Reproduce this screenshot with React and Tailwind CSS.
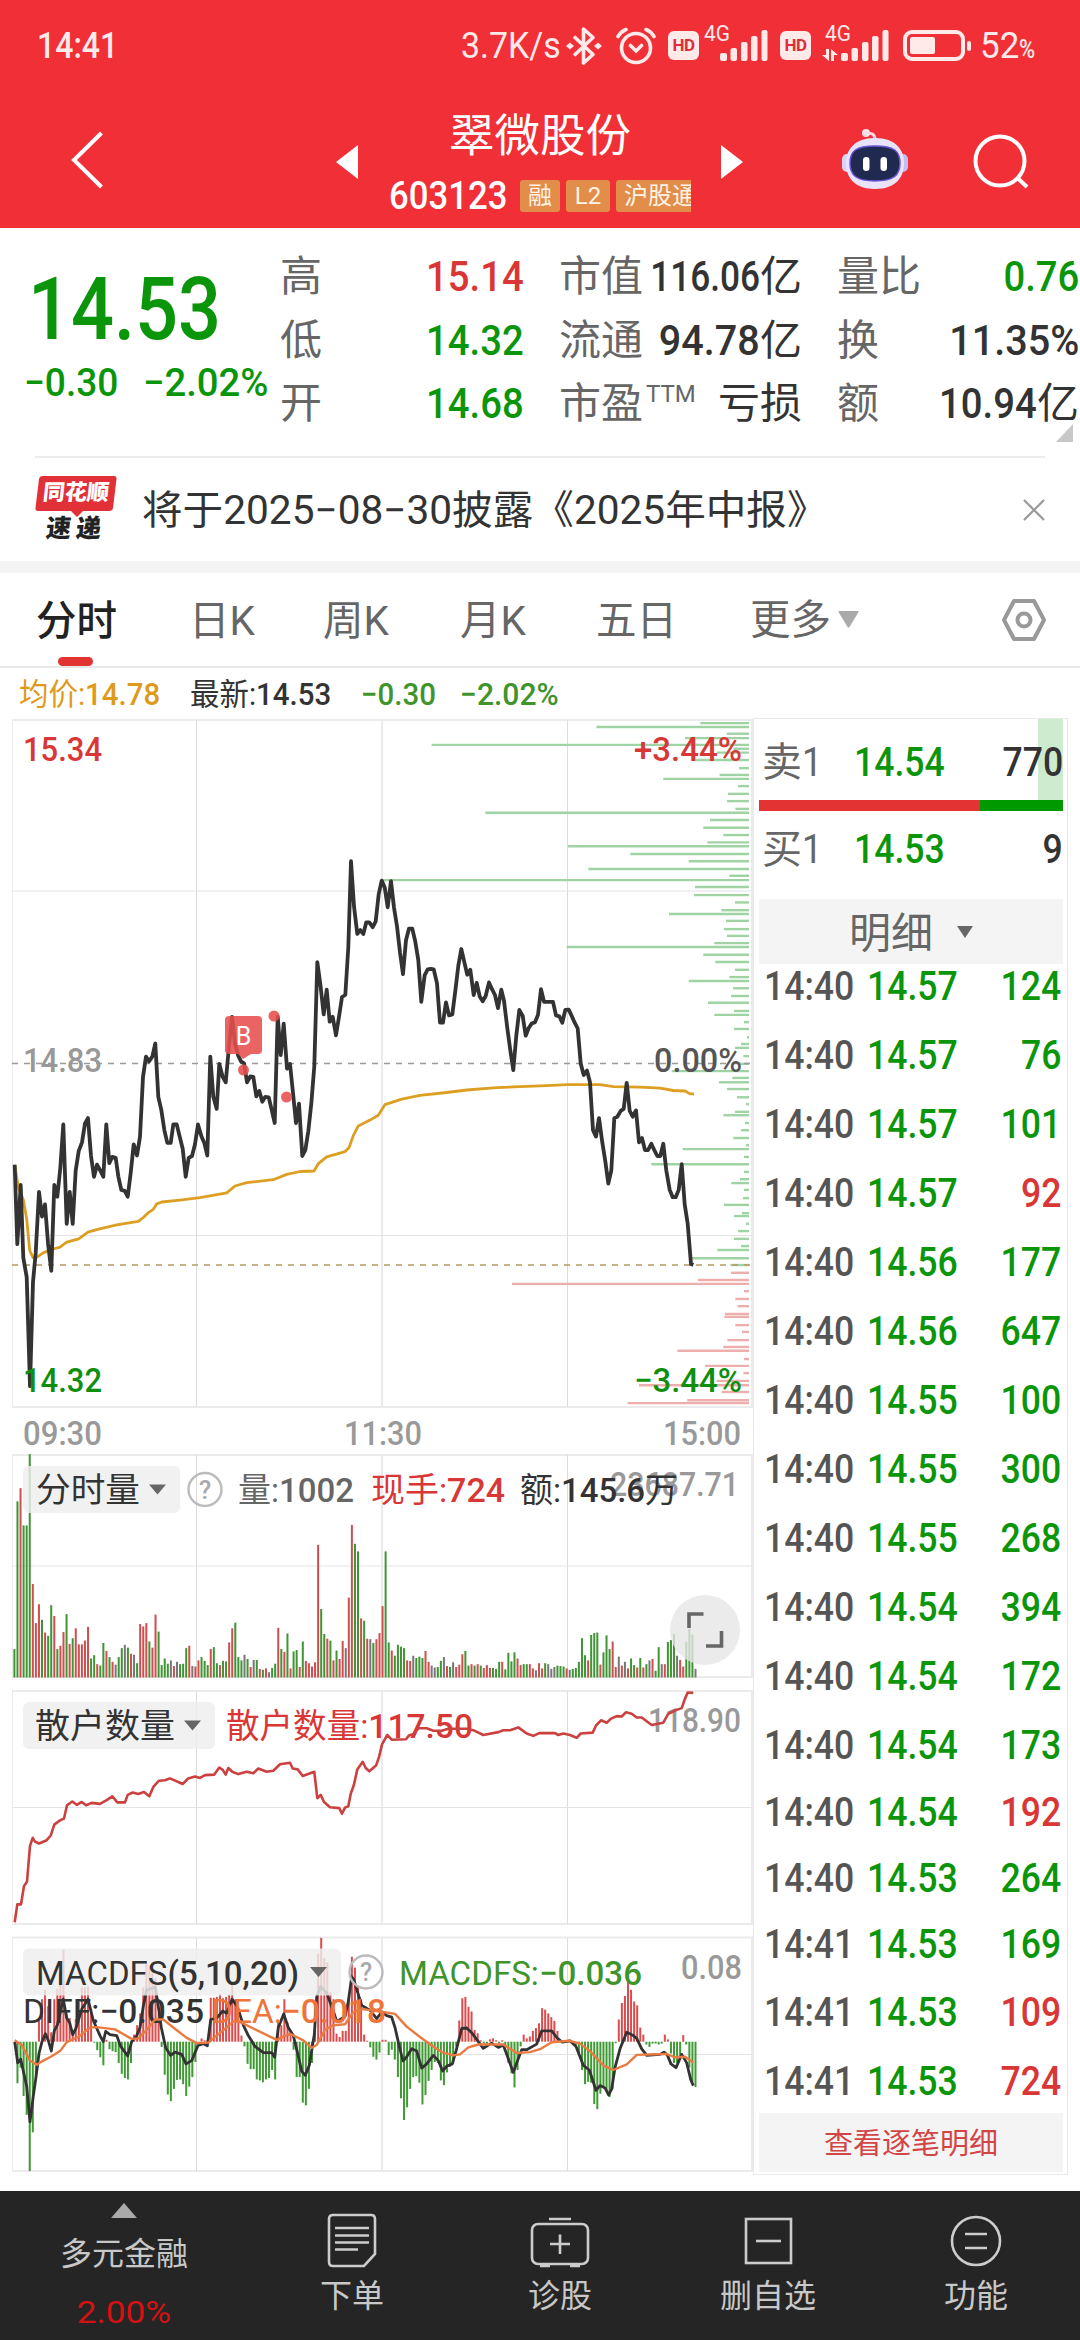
const RED = '#d93636';
const GREEN = '#0f8f0f';

// raw samples are stored on a 3x grid, every panel has its own vertical factor
const PRICE_LINE = `44,938 52,1102 62,980 70,1130 80,1170 90,1395 99,1180 107,1120 117,994 126,1045 135,1020 144,1100 154,1157 163,980 172,1004 181,945 190,855 200,1060 209,994 218,1060 227,950 236,910 246,892 255,853 264,842 273,920 282,963 291,938 301,950 310,963 319,855 328,935 337,922 347,924 355,962 364,990 374,992 383,1004 392,955 401,896 411,919 420,880 429,757 438,715 447,725 457,715 466,688 475,798 484,825 493,866 502,893 512,893 520,855 530,855 539,880 548,905 557,963 566,924 576,920 585,896 594,855 604,879 613,893 622,919 631,715 640,798 650,823 658,730 668,757 677,768 686,700 696,633 705,688 714,712 723,725 732,729 741,768 751,756 760,757 769,797 778,786 787,808 796,798 806,799 815,825 824,852 833,632 842,712 851,647 861,740 870,730 879,790 888,852 897,812 907,920 916,908 925,869 934,812 943,735 952,520 961,565 971,628 980,577 989,643 998,633 1008,671 1017,633 1026,592 1036,588 1045,490 1053,312 1062,405 1072,462 1081,454 1090,462 1099,438 1108,438 1118,448 1127,436 1136,380
1145,352 1154,366 1163,407 1173,353 1182,408 1191,446 1200,500 1209,545 1218,475 1227,451 1237,451 1246,478 1255,516 1264,602 1274,547 1283,535 1292,534 1301,535 1311,564 1320,645 1329,645 1338,603 1347,630 1357,628 1366,580 1375,528 1384,493 1393,520 1402,546 1411,536 1421,588 1430,563 1439,591 1448,601 1457,590 1467,562 1476,576 1485,588 1494,615 1504,577 1512,600 1522,656 1531,702 1540,743 1549,672 1558,619 1568,631 1577,672 1586,656 1595,647 1605,644 1614,629 1623,576 1632,602 1659,602 1668,630 1678,632 1687,645 1696,619 1706,618 1715,631 1724,645 1733,657 1742,729 1751,753 1761,744 1770,768 1779,867 1788,880 1797,842 1807,892 1816,931 1825,977 1834,950 1843,842 1852,839 1862,827 1871,823 1880,769 1889,827 1898,839 1908,826 1917,892 1926,883 1935,908 1944,908 1954,895 1963,908 1972,920 1981,920 1990,895 1999,950 2009,990 2018,1005 2027,1005 2036,990 2045,937 2054,1020 2063,1060 2073,1143 2080,1145`;

const AVG_LINE = `44,938 55,985 70,1010 80,1050 89,1115 99,1130 112,1128 130,1120 154,1113 180,1108 200,1098 236,1091 264,1077 290,1072 350,1062 415,1055 430,1047 445,1037 460,1030 470,1019 485,1015 540,1011 600,1006 680,996 705,982 740,975 820,969 860,958 900,952 942,951 955,936 980,922 1035,911 1047,903 1060,878 1075,858 1110,846 1135,836 1155,814 1205,803 1260,795 1340,789 1400,784 1490,779 1560,777 1640,775 1700,773 1800,773 1840,777 1920,778 1980,780 2020,785 2055,786 2070,792 2082,792`;

const SELL_ORDERS = `27:991 35:679 49:1070 58:945 72:185 80:1090 88:1040 103:975 120:1107 134:1049 142:880 157:1104 173:1074 188:1071 204:1096 212:346 227:1020 243:1000 258:1060 273:1012 281:594 297:781 312:956 328:655 342:1078 351:36 365:975 382:972 397:1095 413:1054 421:897 435:1068 452:1062 466:1071 481:1033 489:590 505:1000 520:1036 536:1095 551:1078 559:956 574:1089 590:1083 604:1014 621:1092 629:1033 644:1122 658:1092 675:1131 689:1113 697:1095 714:1120 730:1110 745:905 759:1087 768:1047 782:1071 799:1101 813:1128 829:1095 836:1060 852:1125 867:1113 883:1090 898:1128 906:938 922:1122 937:844 953:1122 968:1110 976:1084 990:1122 1007:1119 1021:1062 1038:1116 1044:1092 1060:1128 1075:1104 1091:1092 1106:1113 1114:1042 1131:966 1145:1081`;

const BUY_ORDERS = `1161:1083 1176:984 1184:426 1199:1122 1215:1096 1230:1103 1246:1065 1252:1063 1269:1096 1283:1116 1300:1072 1314:1060 1322:922 1339:1122 1353:1005 1368:1120 1384:1040 1393:807 1407:1055 1424:952 1430:773`;

const VOLUME = `g443 g130 r102 g181 g181 g30 r305 r388 r348 g381 r408 g415 g350 r373 g443 r436 r407 g369 r432 g420 r399 r433 r433 r425 r396 g463 g456 r475 g478 g430 r447 g460 r470 k476 g460 g441 k434 g440 r453 k455 g473 r390 r395 r388 g427 r440 r370 g406 g477 g463 g474 k467 r479 k470 g475 g474 g441 r436 k479 r480 r467 g460 g468 g477 r443 g439 g473 r477 g468 g469 r429 r399 g387 g460 g467 k455 g464 r481 k466 g466 r485 g487 r484 k492 g483 g474 r398 g443 r449 g410 r484 g448 g445 r481 g427 r468 r473 r480 r471 r222 g358 g411 r421 g425 r467 g446 r464 r426 k441 r334 r180 g220 g236 r378 g383 r421 k422 g430 r422 r409
r352 g236 g429 r446 g457 g434 g438 g441 r467 r468 k457 g462 g459 g462 r447 r470 k478 k482 g481 g468 k460 r479 g481 k471 r481 r476 r454 g447 g478 r475 g478 r475 g478 r483 r477 r483 g483 g485 g470 r470 g486 g451 g469 g450 r463 r477 g475 g475 r475 r484 k488 r473 r484 g473 k475 k485 k481 g478 g479 g480 r484 k487 g485 g483 g470 g420 g456 r467 g413 g409 g408 r476 g450 g414 g443 r427 r481 k459 r478 k470 r484 g463 g477 r482 g462 r482 g475 k467 r464 g489 g439 k475 r475 g428 g424 g411 k457 r466 r480 g427 g400 g413 k485`;

const RETAIL = `44,1022 52,984 63,984 72,945 81,936 90,860 98,843 105,851 117,855 140,848 152,838 163,815 180,806 192,802 201,774 217,766 230,773 245,767 258,774 275,769 300,771 320,763 337,755 352,768 375,768 383,752 398,747 415,750 432,746 448,755 460,735 477,722 495,721 510,717 548,729 565,717 585,713 600,716 615,710 643,709 658,694 668,699 677,709 685,695 697,703 715,708 740,703 760,706 775,696 800,703 820,701 840,687 870,684 878,696 893,698 908,712 943,703 952,759 962,752 972,767 990,778 1018,780 1026,792 1035,779 1045,776 1052,750 1062,730 1072,698 1088,682 1097,695 1108,702
1128,690 1137,672 1146,645 1162,625 1175,635 1218,634 1227,626 1240,623 1255,611 1280,611 1300,616 1325,616 1345,612 1400,612 1420,615 1450,625 1495,619 1510,615 1530,615 1555,609 1580,622 1600,627 1618,621 1665,621 1675,625 1690,622 1710,625 1730,631 1742,622 1778,620 1788,605 1803,594 1820,599 1832,591 1850,585 1865,586 1878,577 1895,580 1910,588 1925,588 1955,604 1990,599 2005,580 2030,572 2045,568 2055,548 2063,535 2080,536`;

const MACD = `1275 1363 1330 1390 1430 1549 1467 1355 1230 1185 1165 1200 1255 1185 1163 1135 1080 1215 1225 1250 1227 1190 1160 1160 1158 1205 1277 1293 1308 1325 1271 1291 1295 1297 1320 1343 1352 1355 1320 1260 1240 1215 1160 1108 1113 1125 1140 1215 1286 1345 1387 1401 1375 1356 1355 1365 1390 1370 1350 1318 1278 1268 1272 1272 1182 1182 1180 1175 1183 1180 1175 1155 1185 1210 1262 1285 1322 1333 1333 1355 1357 1361 1355 1352 1335 1355 1235 1240 1185 1235 1250 1292 1350 1350 1404 1410 1375 1320 1240 1088 1055 1098 1107 1170 1185 1258 1265 1252 1252 1180 1095 1118 1160 1185 1260 1273 1287 1307 1313 1298
1271 1271 1303 1292 1313 1350 1395 1441 1414 1375 1350 1348 1362 1408 1388 1358 1335 1318 1320 1357 1367 1340 1328 1322 1285 1230 1183 1180 1201 1211 1250 1257 1272 1279 1280 1270 1268 1272 1279 1272 1285 1320 1342 1372 1335 1285 1260 1268 1264 1252 1246 1236 1204 1207 1215 1223 1231 1252 1272 1277 1272 1271 1274 1285 1300 1335 1365 1360 1362 1407 1418 1385 1370 1378 1392 1375 1278 1228 1193 1178 1145 1165 1190 1198 1245 1260 1281 1286 1279 1279 1281 1279 1260 1270 1300 1320 1320 1310 1261 1281 1330 1360 1371`;

const DIFF = `44,1275 53,1320 62,1312 80,1370 90,1445 100,1390 108,1350 117,1300 126,1275 136,1258 145,1272 154,1295 163,1252 172,1240 190,1185 200,1225 209,1235 218,1260 227,1248 246,1205 264,1185 280,1230 300,1262 310,1275 317,1253 330,1260 350,1262 362,1285 383,1305 395,1275 410,1262 420,1245 430,1200 440,1165 466,1160 475,1200 484,1245 497,1288 512,1304 525,1297 545,1302 558,1322 575,1315 594,1283 610,1279 622,1284 632,1228 650,1225 668,1210 680,1215 696,1185 712,1200 730,1240 745,1262 765,1285 790,1298 815,1298 824,1308 835,1245 851,1216 865,1245 880,1262 893,1300 905,1338 916,1346 928,1325 943,1260 950,1180 962,1158 980,1172 1000,1210 1010,1232 1035,1222 1045,1190 1055,1137 1062,1145 1085,1198 1110,1208
1130,1226 1145,1212 1160,1220 1175,1223 1185,1245 1198,1285 1209,1316 1220,1307 1235,1290 1250,1295 1265,1331 1280,1322 1300,1304 1315,1315 1328,1337 1340,1327 1357,1322 1368,1295 1385,1247 1400,1246 1415,1256 1435,1275 1450,1289 1475,1278 1495,1287 1510,1282 1522,1305 1540,1340 1550,1320 1565,1292 1580,1292 1610,1280 1625,1252 1655,1252 1670,1266 1687,1276 1710,1273 1728,1285 1750,1325 1768,1335 1788,1378 1800,1368 1815,1373 1826,1388 1835,1375 1845,1330 1860,1290 1880,1255 1900,1262 1910,1268 1925,1290 1940,1304 1980,1302 1992,1297 2002,1303 2013,1322 2028,1330 2045,1302 2060,1320 2072,1355 2080,1368`;

const DEA = `44,1272 65,1282 90,1315 110,1324 130,1315 155,1306 180,1295 200,1276 235,1265 270,1245 290,1244 345,1249 395,1269 415,1268 440,1250 465,1228 490,1228 520,1245 560,1267 590,1278 625,1277 650,1262 680,1245 700,1232 720,1233 760,1247 830,1271 870,1258 910,1272 935,1288 950,1282 975,1250 1000,1240 1035,1238 1060,1212 1090,1206
1110,1208 1150,1212 1185,1216 1220,1243 1260,1265 1295,1283 1325,1297 1360,1304 1380,1302 1405,1287 1435,1281 1510,1281 1550,1299 1590,1297 1620,1291 1655,1276 1710,1273 1740,1279 1770,1295 1810,1325 1840,1335 1880,1323 1910,1303 2000,1301 2025,1308 2055,1307 2080,1319`;

const priceY = (v) => 710 + v / 2.063;
const panelY = (v) => 1440 + v / 2.119;

function toPoints(raw, fy) {
  return raw
    .trim()
    .split(/\s+/)
    .map((p) => {
      const [x, y] = p.split(',').map(Number);
      return `${(x / 3).toFixed(1)},${fy(y).toFixed(1)}`;
    })
    .join(' ');
}

const barX = (i) => 14.4 + i * 3.068;

const tabs = [
  { label: '日K', cls: 'w-[134px]' },
  { label: '周K', cls: 'w-[137px]' },
  { label: '月K', cls: 'w-[136px]' },
  { label: '五日', cls: 'w-[154px]' },
];

const ticks = [
  ['14:40', '14.57', 124],
  ['14:40', '14.57', 76],
  ['14:40', '14.57', 101],
  ['14:40', '14.57', 92, true],
  ['14:40', '14.56', 177],
  ['14:40', '14.56', 647],
  ['14:40', '14.55', 100],
  ['14:40', '14.55', 300],
  ['14:40', '14.55', 268],
  ['14:40', '14.54', 394],
  ['14:40', '14.54', 172],
  ['14:40', '14.54', 173],
  ['14:40', '14.54', 192, true],
  ['14:40', '14.53', 264],
  ['14:41', '14.53', 169],
  ['14:41', '14.53', 109, true],
  ['14:41', '14.53', 724, true],
];

// narrow digits, anchored left or right
function Num({ children, right, className = '' }) {
  return (
    <span
      className={`inline-block whitespace-nowrap font-medium scale-x-[0.89] ${right ? 'origin-right' : 'origin-left'} ${className}`}
    >
      {children}
    </span>
  );
}

function Label({ x, y, w, size = 34, fill = '#999', weight = 500, children }) {
  return (
    <text
      x={x}
      y={y + 12}
      textLength={w}
      lengthAdjust="spacingAndGlyphs"
      fontSize={size}
      fontWeight={weight}
      fill={fill}
    >
      {children}
    </text>
  );
}

function Grid({ top, bottom, rows }) {
  return (
    <g fill="none" stroke="#dcdcdc" strokeWidth="1">
      <rect x="12" y={top} width="740" height={bottom - top} stroke="#ebebeb" strokeWidth="2" />
      <path d={`M196.5 ${top}V${bottom}M567.5 ${top}V${bottom}`} />
      <path d={`M382 ${top}V${bottom}`} stroke="#ebebeb" strokeWidth="2" />
      {rows.map((y) => (
        <path key={y} d={`M12 ${y}H752`} stroke="#e4e4e4" />
      ))}
    </g>
  );
}

function Chip({ y, w, arrow, children }) {
  return (
    <>
      <rect x="23" y={y - 23.5} width={w} height="47" rx="6" fill="#eeeeee" fillOpacity="0.82" />
      {children}
      <path d={`M${arrow} ${y - 5}h17l-8.5 10z`} fill="#666" />
    </>
  );
}

function Help({ x, y }) {
  return (
    <>
      <circle cx={x} cy={y} r="16.5" fill="none" stroke="#bbb" strokeWidth="2.4" />
      <text x={x} y={y + 9} fontSize="25" fill="#aaa" fontWeight="500" textAnchor="middle">
        ?
      </text>
    </>
  );
}

function Signal() {
  return (
    <svg className="h-[31px] w-[48px]" viewBox="0 0 48 31" fill="#ffe9e9">
      <rect x="0" y="23" width="7" height="8" rx="2" />
      <rect x="10.5" y="18" width="6.5" height="13" rx="2" />
      <rect x="21" y="12" width="6.5" height="19" rx="2" />
      <rect x="31" y="6" width="6.5" height="25" rx="2" />
      <rect x="41.5" y="0" width="6" height="31" rx="2" />
    </svg>
  );
}

function Hd() {
  return (
    <span className="flex h-[29px] w-[31px] items-center justify-center rounded-[6px] bg-[#ffe9e9] text-[17px] font-bold tracking-[-0.5px] text-[#d9303a]">
      HD
    </span>
  );
}

function StatusBar() {
  return (
    <div className="flex h-[91px] items-center pl-[37px] text-[36px] text-[#ffe9e9]">
      <Num className="w-[424px]">14:41</Num>
      <span className="w-[105px]">
        <Num className="!font-normal !scale-x-[0.94]">3.7K/s</Num>
      </span>
      <svg className="h-[40px] w-[36px]" viewBox="0 0 36 40" fill="none" stroke="#ffe9e9" strokeWidth="3.6">
        <path d="M8 10.5L27 28.5L17.5 37V3L27 11.5L8 29.5" strokeLinejoin="round" />
        <path d="M0 20l4-3.5l4 3.5l-4 3.5zM28 20l4-3.5l4 3.5l-4 3.5z" fill="#ffe9e9" stroke="none" />
      </svg>
      <svg className="ml-[14px] h-[38px] w-[40px]" viewBox="0 0 40 38" fill="none" stroke="#ffe9e9" strokeWidth="3.6" strokeLinecap="round">
        <circle cx="20" cy="21" r="14.5" />
        <path d="M14.5 18.5L20 24l5.5-5.5M2 9.5Q5 4.5 10 2.5M38 9.5Q35 4.5 30 2.5" />
      </svg>
      <div className="ml-[12px]">
        <Hd />
      </div>
      <div className="relative ml-[21px] h-[31px]">
        <Signal />
        <span className="absolute -left-[16px] -top-[7px] origin-left scale-x-[0.95] text-[22px] leading-[22px]">4G</span>
      </div>
      <div className="ml-[12px]">
        <Hd />
      </div>
      <div className="relative ml-[30px] h-[31px]">
        <Signal />
        <span className="absolute -left-[16px] -top-[7px] origin-left scale-x-[0.95] text-[22px] leading-[22px]">4G</span>
        <svg className="absolute -left-[19px] top-[19px] h-[12px] w-[16px]" viewBox="0 0 16 12" fill="#ffe9e9">
          <path d="M4 0h3v12L0 6h4zM9 0l7 6h-4v6H9z" />
        </svg>
      </div>
      <svg className="ml-[14px] h-[31px] w-[69px]" viewBox="0 0 69 31">
        <rect x="2" y="2" width="58" height="27" rx="7" fill="none" stroke="#ffe9e9" strokeWidth="4" />
        <rect x="7" y="7" width="25" height="17" rx="2" fill="#ffe9e9" />
        <rect x="64" y="11" width="4" height="10" rx="2" fill="#ffe9e9" />
      </svg>
      <span className="ml-[8px] w-[39px]">
        <Num className="!font-normal !scale-x-[0.97]">52</Num>
      </span>
      <span className="mt-[8px] origin-left scale-x-[0.88] text-[25px] font-medium">%</span>
    </div>
  );
}

function Header() {
  return (
    <div className="flex h-[137px] text-white">
      <svg className="ml-[70px] mt-[40px] h-[58px] w-[34px]" viewBox="0 0 34 58" fill="none" stroke="#fff" strokeWidth="4">
        <path d="M31.5 2L4 29L31.5 56" />
      </svg>
      <svg className="ml-[231px] mt-[53px] h-[36px] w-[24px]" viewBox="0 0 24 36" fill="#fff">
        <path d="M23 1v34L1 18z" />
      </svg>
      <div className="ml-[30px] flex w-[302px] flex-col">
        <div className="mt-[14px] text-center text-[45.5px] leading-[64px]">翠微股份</div>
        <div className="mt-[9px] flex h-[36px] items-center overflow-hidden text-[39px] leading-none">
          <Num className="w-[131px]">603123</Num>
          <div className="flex gap-[6px] text-[24px] leading-[32px] text-[#fff3e6]">
            <span className="w-[40px] shrink-0 rounded-[3px] bg-[#e28d49] text-center">融</span>
            <span className="w-[44px] shrink-0 rounded-[3px] bg-[#e28d49] text-center">L2</span>
            <span className="w-[76px] shrink-0 overflow-hidden whitespace-nowrap rounded-l-[3px] bg-[#e28d49] pl-[8px]">
              沪股通
            </span>
          </div>
        </div>
      </div>
      <svg className="ml-[29px] mt-[53px] h-[36px] w-[24px]" viewBox="0 0 24 36" fill="#fff">
        <path d="M1 1v34L23 18z" />
      </svg>
      <svg className="ml-[98px] mt-[37px] h-[64px] w-[66px]" viewBox="0 0 66 64">
        <path d="M33 12c0-6-3-7-8-7" fill="none" stroke="#f6d5e4" strokeWidth="3" />
        <circle cx="24" cy="5" r="4" fill="#fbdfe8" />
        <rect x="0" y="26" width="10" height="18" rx="5" fill="#d9d3f5" />
        <rect x="56" y="26" width="10" height="18" rx="5" fill="#c3bdf0" />
        <path d="M33 10C54 10 62 22 62 35C62 50 53 61 33 61C13 61 4 50 4 35C4 22 12 10 33 10z" fill="#e9e4fb" />
        <path d="M33 18C52 18 58 23 58 35C58 47 52 53 33 53C14 53 8 47 8 35C8 23 14 18 33 18z" fill="#202a50" stroke="#6a55d8" strokeWidth="1.5" />
        <rect x="21" y="29" width="6.5" height="14" rx="3.2" fill="#fff" />
        <rect x="38.5" y="29" width="6.5" height="14" rx="3.2" fill="#fff" />
      </svg>
      <svg className="ml-[65px] mt-[43px] h-[56px] w-[57px]" viewBox="0 0 57 56" fill="none" stroke="#fff" strokeWidth="4">
        <circle cx="27" cy="27" r="24.5" />
        <path d="M44 43.5L54 53" />
      </svg>
    </div>
  );
}

function Quote() {
  return (
    <div className="relative flex h-[228px] whitespace-nowrap text-[42px] leading-[63.5px] text-[#666]">
      <div className="w-[280px] shrink-0 text-[#0a950a]">
        <div className="mt-[30px] pl-[28px] text-[88px] leading-[102px]">
          <Num className="!scale-x-[0.86]">14.53</Num>
        </div>
        <div className="mt-[1px] flex h-[44px] pl-[24px] text-[39px] leading-[44px]">
          <span className="w-[119px]">
            <Num className="!scale-x-[0.95]">−0.30</Num>
          </span>
          <Num className="!scale-x-[0.98]">−2.02%</Num>
        </div>
      </div>
      <div className="mt-[17px] w-[244px] shrink-0">
        {[
          ['高', '15.14', 'text-[#d93636]'],
          ['低', '14.32', 'text-[#0a950a]'],
          ['开', '14.68', 'text-[#0a950a]'],
        ].map(([k, v, c]) => (
          <div key={k} className="flex h-[63.5px] justify-between">
            <span>{k}</span>
            <Num right className={`text-[43px] ${c}`}>
              {v}
            </Num>
          </div>
        ))}
      </div>
      <div className="ml-[35px] mt-[17px] w-[243px] shrink-0">
        <div className="flex h-[63.5px] justify-between">
          <span>市值</span>
          <div className="flex justify-end text-[#333]">
            <Num right className="-ml-[20px] !scale-x-[0.82] text-[43px]">
              116.06
            </Num>
            亿
          </div>
        </div>
        <div className="flex h-[63.5px] justify-between">
          <span>流通</span>
          <div className="flex text-[#333]">
            <Num right className="!scale-x-[0.92] text-[43px]">
              94.78
            </Num>
            亿
          </div>
        </div>
        <div className="flex h-[63.5px] justify-between">
          <span className="flex">
            市盈<span className="ml-[3px] -mt-[9px] text-[24px]">TTM</span>
          </span>
          <span className="text-[#333]">亏损</span>
        </div>
      </div>
      <div className="ml-[35px] mt-[17px] w-[242px] shrink-0">
        <div className="flex h-[63.5px] justify-between">
          <span>量比</span>
          <Num right className="text-[43px] text-[#0a950a]">
            0.76
          </Num>
        </div>
        <div className="flex h-[63.5px] justify-between">
          <span>换</span>
          <Num right className="!scale-x-[0.92] text-[43px] text-[#333]">
            11.35%
          </Num>
        </div>
        <div className="flex h-[63.5px] justify-between">
          <span>额</span>
          <div className="flex text-[#333]">
            <Num right className="text-[43px]">
              10.94
            </Num>
            亿
          </div>
        </div>
      </div>
      <svg className="absolute right-[7px] top-[196px] h-[18px] w-[17px]" viewBox="0 0 17 18">
        <path d="M17 0v18H0z" fill="#c8c8c8" />
      </svg>
    </div>
  );
}

function Notice() {
  return (
    <div className="mx-[35px] flex h-[105px] items-center border-t-2 border-[#ececec]">
      <div className="relative flex h-[68px] w-[82px] shrink-0 flex-col items-center">
        <svg className="absolute inset-0 h-[68px] w-[82px]" viewBox="0 0 82 68" fill="#e23038">
          <path d="M8 0H79Q82 0 81.5 3L78 32Q77.5 35 74 35H48L42 41L36 35H3Q0 35 .5 32L4 3Q4.5 0 8 0z" />
        </svg>
        <span className="relative mt-[3px] h-[30px] -skew-x-6 text-[22px] font-black leading-[28px] text-white">同花顺</span>
        <span className="relative mt-[6px] -skew-x-6 text-[25px] font-black leading-[28px] tracking-[5px] text-[#222]">速递</span>
      </div>
      <span className="ml-[25px] mt-[2px] flex-1 origin-left scale-x-[1.02] whitespace-nowrap text-[39.8px] text-[#333]">
        将于2025−08−30披露《2025年中报》
      </span>
      <svg className="h-[22px] w-[22px]" viewBox="0 0 22 22" stroke="#999" strokeWidth="2.2">
        <path d="M1 1L21 21M21 1L1 21" />
      </svg>
    </div>
  );
}

function Tabs() {
  return (
    <div className="flex h-[95px] border-b-2 border-[#e8e8e8] pl-[36px] text-[40.5px] leading-[96px] text-[#666]">
      <div className="relative w-[153px] font-medium text-[#222]">
        分时
        <span className="absolute bottom-0 left-[22px] h-[9px] w-[35px] rounded-full bg-[#e33333]" />
      </div>
      {tabs.map((t) => (
        <div key={t.label} className={t.cls}>
          {t.label}
        </div>
      ))}
      <div className="flex w-[251px] items-center">
        更多
        <svg className="ml-[7px] h-[17px] w-[21px]" viewBox="0 0 21 17">
          <path d="M1 0H20Q21 0 20.5 1L11.5 16Q10.5 17 9.5 16L.5 1Q0 0 1 0z" fill="#aaa" />
        </svg>
      </div>
      <svg className="mt-[25px] h-[44px] w-[46px]" viewBox="0 0 46 44" fill="none" stroke="#999" strokeWidth="4">
        <path d="M13 3H33L43 22L33 41H13L3 22z" strokeLinejoin="round" />
        <circle cx="23" cy="22" r="6.5" />
      </svg>
    </div>
  );
}

function PriceChart() {
  return (
    <svg className="h-[736px] w-[742px]" viewBox="12 718 742 736">
      <Grid top={720} bottom={1407} rows={[891, 1235.5]} />
      <g strokeWidth="2.4">
        {SELL_ORDERS.split(' ').map((s) => {
          const [y, x] = s.split(':').map(Number);
          return <path key={y} d={`M${370 + x / 3} ${priceY(y)}H749`} stroke="#9fd3a3" />;
        })}
        {BUY_ORDERS.split(' ').map((s) => {
          const [y, x] = s.split(':').map(Number);
          return <path key={y} d={`M${370 + x / 3} ${priceY(y)}H749`} stroke="#eeaeae" />;
        })}
      </g>
      <path d="M12 1063.5H752" stroke="#999" strokeWidth="1.5" strokeDasharray="6 6" />
      <path d="M12 1265H752" stroke="#b59a63" strokeWidth="1.5" strokeDasharray="6 6" />
      <polyline points={toPoints(AVG_LINE, priceY)} fill="none" stroke="#dd9f22" strokeWidth="2.8" strokeLinejoin="round" />
      <polyline points={toPoints(PRICE_LINE, priceY)} fill="none" stroke="#333" strokeWidth="3.8" strokeLinejoin="round" />
      <g fill="#e84f4f" fillOpacity="0.88">
        <path d="M229 1016H258Q262 1016 262 1020V1050Q262 1054 258 1054H251L243 1059L238 1054H229Q225 1054 225 1050V1020Q225 1016 229 1016z" />
        <circle cx="243.5" cy="1070" r="5.5" />
        <circle cx="274" cy="1016" r="5.5" />
        <circle cx="286.5" cy="1097" r="5.5" />
      </g>
      <text x="243.5" y="1045" fontSize="25" fill="#fff" textAnchor="middle">
        B
      </text>
      <Label x={23} y={749} w={79} fill={RED}>15.34</Label>
      <Label x={634} y={749} w={108} fill={RED}>+3.44%</Label>
      <Label x={23} y={1060} w={79}>14.83</Label>
      <Label x={654} y={1060} w={88} fill="#555">0.00%</Label>
      <Label x={23} y={1380} w={79} fill={GREEN}>14.32</Label>
      <Label x={634} y={1380} w={108} fill={GREEN}>−3.44%</Label>
      <Label x={23} y={1433} w={79}>09:30</Label>
      <Label x={344} y={1433} w={78}>11:30</Label>
      <Label x={663} y={1433} w={78}>15:00</Label>
    </svg>
  );
}

function VolumeChart() {
  const colors = { r: '#cf4f4f', g: '#3f9434', k: '#777' };
  return (
    <svg className="h-[236px] w-[742px]" viewBox="12 1454 742 236">
      <Grid top={1455} bottom={1677} rows={[1566]} />
      {VOLUME.split(/\s+/).map((s, i) => {
        const y = panelY(Number(s.slice(1)));
        return <rect key={i} x={barX(i) - 1} y={y} width="2" height={1677.5 - y} fill={colors[s[0]]} />;
      })}
      <Label x={610} y={1484} w={129}>23687.71</Label>
      <Chip y={1489.5} w={157} arrow={149}>
        <Label x={36} y={1490} w={104} fill="#333" weight={400}>分时量</Label>
      </Chip>
      <Help x={205} y={1489.5} />
      <Label x={238} y={1490} w={116} fill="#666" weight={400}>
        量:<tspan fontWeight="500">1002</tspan>
      </Label>
      <Label x={371} y={1490} w={134} fill={RED} weight={400}>
        现手:<tspan fontWeight="500">724</tspan>
      </Label>
      <Label x={520} y={1490} w={158} fill="#333" weight={400}>
        额:<tspan fontWeight="500">145.6</tspan>万
      </Label>
      <circle cx="705" cy="1630" r="35" fill="#e6e6e6" fillOpacity="0.8" />
      <path d="M703.5 1614H689V1628M706 1646H721.5V1631" fill="none" stroke="#666" strokeWidth="3.6" />
    </svg>
  );
}

function RetailChart() {
  return (
    <svg className="h-[246px] w-[742px]" viewBox="12 1690 742 246">
      <Grid top={1691} bottom={1924} rows={[1807.5]} />
      <Label x={648} y={1720} w={93}>118.90</Label>
      <Chip y={1725.5} w={192} arrow={184}>
        <Label x={35} y={1726} w={140} fill="#333" weight={400}>散户数量</Label>
      </Chip>
      <Label x={226} y={1726} w={247} fill={RED} weight={400}>
        散户数量:<tspan fontWeight="500">117.50</tspan>
      </Label>
      <polyline points={toPoints(RETAIL, panelY)} fill="none" stroke="#cb4140" strokeWidth="2.6" strokeLinejoin="round" />
    </svg>
  );
}

function MacdChart() {
  const zero = 2041.7;
  return (
    <svg className="h-[238px] w-[742px]" viewBox="12 1936 742 238">
      <Grid top={1937.5} bottom={2171} rows={[2054.5]} />
      {MACD.split(/\s+/).map((s, i) => {
        const y = panelY(Number(s));
        const up = y < zero;
        return (
          <rect
            key={i}
            x={barX(i) - 1}
            y={up ? y : zero}
            width="2"
            height={Math.abs(y - zero)}
            fill={up ? '#dc4c4c' : '#3f9a34'}
          />
        );
      })}
      <polyline points={toPoints(DIFF, panelY)} fill="none" stroke="#333" strokeWidth="2.8" strokeLinejoin="round" />
      <Chip y={1972} w={318} arrow={310}>
        <Label x={36} y={1973} w={263} fill="#333" weight={400}>
          MACDFS<tspan fontWeight="500">(5,10,20)</tspan>
        </Label>
      </Chip>
      <Help x={366} y={1972} />
      <Label x={399} y={1973} w={243} fill="#3f942c" weight={400}>
        MACDFS:<tspan fontWeight="500">−0.036</tspan>
      </Label>
      <Label x={681} y={1967} w={61}>0.08</Label>
      <Label x={23} y={2011} w={181} fill="#333" weight={400}>
        DIFF:<tspan fontWeight="500">−0.035</tspan>
      </Label>
      <Label x={211} y={2011} w={175} fill="#ee743c" weight={400}>
        DEA:<tspan fontWeight="500">−0.018</tspan>
      </Label>
      <polyline points={toPoints(DEA, panelY)} fill="none" stroke="#e97b42" strokeWidth="2.4" strokeLinejoin="round" />
    </svg>
  );
}

function TickRow({ t, cls }) {
  const [time, price, qty, up] = t;
  return (
    <div className={`flex items-center ${cls}`}>
      <Num className="w-[103px] text-[#555]">{time}</Num>
      <Num className="text-[#0a950a]">{price}</Num>
      <Num right className={up ? 'ml-auto text-[#d93636]' : 'ml-auto text-[#0a950a]'}>
        {qty}
      </Num>
    </div>
  );
}

function OrderPanel() {
  return (
    <div className="flex h-[1457px] w-[315px] flex-col border border-[#e8e8e8] pl-[5px] pr-[4px] text-[40px] leading-none">
      <div className="relative flex h-[81px] shrink-0 items-center pt-[6px]">
        <span className="absolute right-0 top-0 h-[81px] w-[25px] bg-[#cdebcf]" />
        <span className="relative w-[95px] pl-[3px] text-[#666]">
          卖<span className="inline-block origin-left scale-x-90">1</span>
        </span>
        <Num className="text-[#0a950a]">14.54</Num>
        <Num right className="relative ml-auto text-[#333]">770</Num>
      </div>
      <div className="flex h-[11px] shrink-0">
        <span className="w-[221px] bg-[#e33333]" />
        <span className="flex-1 bg-[#009900]" />
      </div>
      <div className="flex h-[88px] shrink-0 items-center pb-[10px]">
        <span className="w-[95px] pl-[3px] text-[#666]">
          买<span className="inline-block origin-left scale-x-90">1</span>
        </span>
        <Num className="text-[#0a950a]">14.53</Num>
        <Num right className="ml-auto text-[#333]">9</Num>
      </div>
      <div className="flex h-[65px] shrink-0 items-center justify-center gap-[24px] bg-[#f4f4f4] pt-[4px] text-[42px] text-[#666]">
        明细
        <svg className="-mt-[4px] h-[12px] w-[16px]" viewBox="0 0 16 12">
          <path d="M0 0h16L8 12z" fill="#666" />
        </svg>
      </div>
      <div className="-mb-[12px] -mt-[12px] shrink-0 pl-[5px] pr-[2px]">
        {ticks.slice(0, 12).map((t, i) => (
          <TickRow key={i} t={t} cls="h-[69px]" />
        ))}
        {ticks.slice(12, 15).map((t, i) => (
          <TickRow key={i} t={t} cls="h-[66px]" />
        ))}
        {ticks.slice(15).map((t, i) => (
          <TickRow key={i} t={t} cls="h-[69px]" />
        ))}
      </div>
      <div className="mb-[2px] mt-auto flex h-[59px] shrink-0 items-center justify-center bg-[#f4f4f4] pt-[3px] text-[29px] text-[#d24545]">
        查看逐笔明细
      </div>
    </div>
  );
}

function NavItem({ label, children }) {
  return (
    <div className="flex w-[208px] flex-col items-center pt-[22px]">
      <svg className="h-[56px] w-[60px]" viewBox="0 0 60 56" fill="none" stroke="#ccc" strokeWidth="2.6">
        {children}
      </svg>
      <span className="mt-[3px] leading-[48px]">{label}</span>
    </div>
  );
}

function BottomNav() {
  return (
    <div className="flex h-[149px] bg-[#252525] text-[32px] text-[#c8c8c8]">
      <div className="flex w-[248px] flex-col items-center">
        <svg className="mt-[12px] h-[15px] w-[26px]" viewBox="0 0 26 15">
          <path d="M13 0L26 15H0z" fill="#aaa" />
        </svg>
        <span className="mt-[12px] leading-[48px]">多元金融</span>
        <span className="mt-[10px] origin-center scale-x-[1.1] leading-[48px] text-[#d31212]">2.00%</span>
      </div>
      <NavItem label="下单">
        <path d="M11 2H49Q53 2 53 6V41L42 53H11Q7 53 7 49V6Q7 2 11 2z" />
        <path d="M13 15H47M13 22.5H47M13 29.5H47M13 36.5H36" />
      </NavItem>
      <NavItem label="诊股">
        <rect x="2" y="11" width="56" height="40" rx="6" />
        <path d="M19 6H41M30 21.5V41M20 31H40M10 53H20M40 53H50" />
      </NavItem>
      <NavItem label="删自选">
        <rect x="8" y="6" width="45" height="44" />
        <path d="M18 28H43" />
      </NavItem>
      <NavItem label="功能">
        <circle cx="30" cy="28" r="24" />
        <path d="M19 21H41M19 35H41" />
      </NavItem>
    </div>
  );
}

export default function App() {
  return (
    <div className="h-[2340px] w-[1080px] overflow-hidden bg-white font-[Roboto,'Noto_Sans_CJK_SC',sans-serif]">
      <div className="bg-[#f02f37]">
        <StatusBar />
        <Header />
      </div>
      <Quote />
      <Notice />
      <div className="h-[12px] bg-[#f4f4f4]" />
      <Tabs />
      <div className="flex">
        <div className="flex w-[753px] flex-col pl-[12px]">
          <div className="flex h-[50px] items-center pl-[7px] pt-[3px] text-[31px] leading-none">
            <Num className="w-[171px] !scale-x-[0.95] text-[#dd9a1c]">
              <span className="font-normal">均价:</span>14.78
            </Num>
            <Num className="w-[171px] !scale-x-[0.95] text-[#333]">
              <span className="font-normal">最新:</span>14.53
            </Num>
            <Num className="w-[99px] !scale-x-[0.95] text-[#3f942c]">−0.30</Num>
            <Num className="!scale-x-[0.97] text-[#3f942c]">−2.02%</Num>
          </div>
          <PriceChart />
          <VolumeChart />
          <RetailChart />
          <MacdChart />
        </div>
        <div className="mb-[16px] mt-[50px]">
          <OrderPanel />
        </div>
      </div>
      <BottomNav />
    </div>
  );
}
